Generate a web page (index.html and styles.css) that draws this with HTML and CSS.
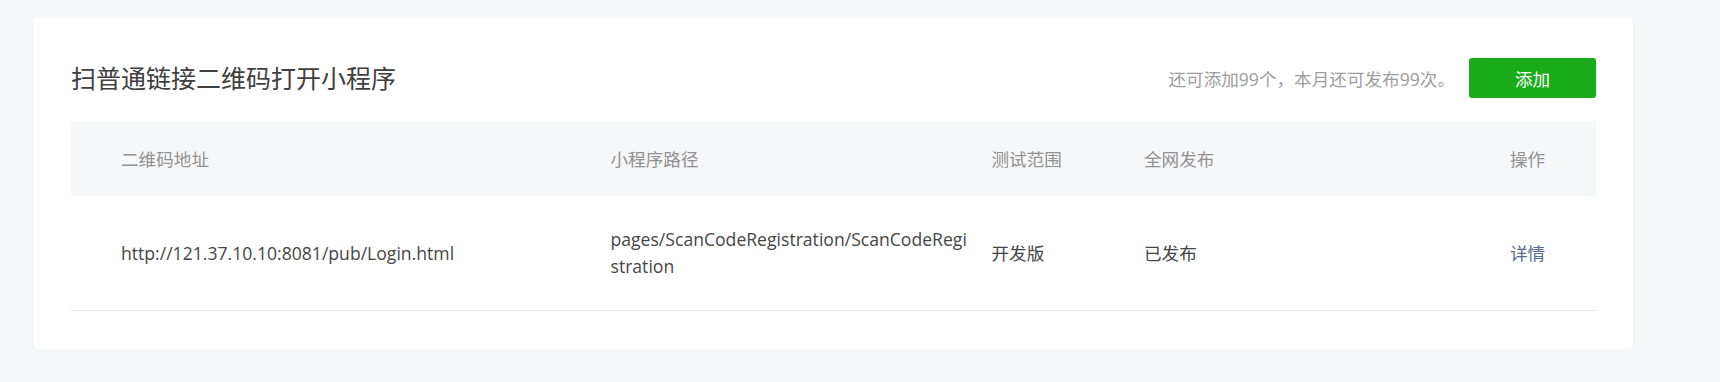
FILE: index.html
```html
<!DOCTYPE html>
<html lang="zh-CN">
<head>
<meta charset="utf-8">
<title>扫普通链接二维码打开小程序</title>
<link rel="stylesheet" href="styles.css">
</head>
<body>
<div class="page">
  <section class="card">
    <header class="card-head">
      <h2 class="title">扫普通链接二维码打开小程序</h2>
      <div class="actions">
        <span class="quota">还可添加99个，本月还可发布99次。</span>
        <button class="btn-add" type="button">添加</button>
      </div>
    </header>
    <div class="table">
      <div class="row row-head">
        <div class="cell cell-first">二维码地址</div>
        <div class="cell">小程序路径</div>
        <div class="cell">测试范围</div>
        <div class="cell">全网发布</div>
        <div class="cell">操作</div>
      </div>
      <div class="row row-body">
        <div class="cell cell-first">http://121.37.10.10:8081/pub/Login.html</div>
        <div class="cell cell-path">pages/ScanCodeRegistration/ScanCodeRegistration</div>
        <div class="cell">开发版</div>
        <div class="cell">已发布</div>
        <div class="cell"><a class="link" href="#">详情</a></div>
      </div>
    </div>
  </section>
</div>
</body>
</html>
```

FILE: styles.css
```css
* { box-sizing: border-box; }
html, body {
  margin: 0;
  padding: 0;
  background: #f6f7f9;
  font-family: "Open Sans", "Noto Sans CJK SC", sans-serif;
  color: #404040;
}
.page {
  padding: 18px 0 0 33px;
}
.card {
  width: 1600px;
  background: #fff;
  border-radius: 4px;
  box-shadow: 0 1px 2px rgba(0, 0, 0, 0.08);
  padding: 40px 37px 38px 38px;
}
.card-head {
  display: flex;
  align-items: center;
  justify-content: space-between;
  height: 40px;
  margin-bottom: 23px;
}
.title {
  margin: 0;
  font-size: 25px;
  font-weight: 400;
  color: #404040;
  line-height: 1;
}
.actions {
  display: flex;
  align-items: center;
  gap: 14px;
}
.quota {
  font-size: 17.6px;
  color: #9d9d9d;
}
.btn-add {
  width: 127px;
  height: 40px;
  border: 0;
  border-radius: 3px;
  background: #1aad19;
  color: #fff;
  font-family: inherit;
  font-size: 17.6px;
  cursor: pointer;
}
.table {
  width: 1525px;
  font-size: 17.6px;
}
.row {
  display: grid;
  grid-template-columns: 539.5px 381px 152.5px 366px 86px;
  align-items: center;
}
.row-head {
  height: 75px;
  background: #f6f7f9;
  color: #919191;
}
.row-body {
  height: 115px;
  border-bottom: 1px solid #e7e7eb;
  line-height: 27px;
  color: #454545;
}
.cell-first {
  padding-left: 50px;
}
.cell-path {
  word-break: break-all;
  padding-right: 20px;
}
.link {
  color: #576b95;
  text-decoration: none;
}
```
